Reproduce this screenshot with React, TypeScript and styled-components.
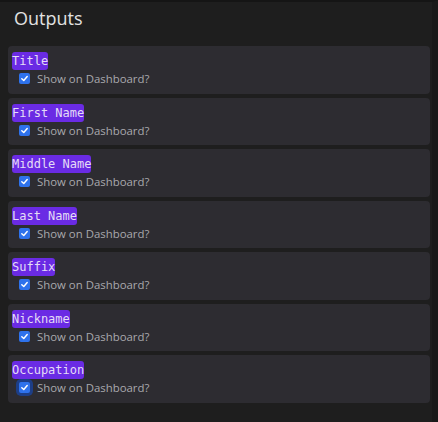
import React from "react";
import styled, { createGlobalStyle } from "styled-components";

const Global = createGlobalStyle`
  html, body { margin: 0; padding: 0; background: #1e1e1e; }
  body { font-family: "Open Sans", "Noto Sans", sans-serif; }
`;

const Panel = styled.div`
  width: 438px;
  height: 422px;
  box-sizing: border-box;
  background: #1e1e1e;
  border-top: 2px solid #151515;
  border-right: 6px solid #191919;
  padding: 0 2px 0 8px;
  display: flex;
  flex-direction: column;
`;

const Heading = styled.h2`
  margin: 0;
  padding: 5px 0 0 6px;
  height: 39px;
  box-sizing: border-box;
  font-family: "Open Sans", sans-serif;
  font-weight: 400;
  font-size: 18px;
  line-height: 22px;
  color: #e2e2e2;
`;

const List = styled.div`
  display: flex;
  flex-direction: column;
  gap: 4px;
  margin-top: 5px;
`;

const Card = styled.div`
  background: #2d2c31;
  border-radius: 4px;
  padding: 6px 4px 7px 4px;
  height: 47.5px;
  box-sizing: border-box;
  display: flex;
  flex-direction: column;
  align-items: flex-start;
`;

const Tag = styled.span`
  font-family: "DejaVu Sans Mono", monospace;
  font-size: 12px;
  line-height: 18px;
  color: #e4dcf6;
  background: #6a2be4;
  border-radius: 3px;
`;

const Row = styled.label`
  display: flex;
  align-items: center;
  gap: 7px;
  padding-left: 7px;
  padding-top: 1px;
  height: 17px;
  font-family: "Open Sans", sans-serif;
  font-size: 11.4px;
  color: #a9a9ad;
`;

const Box = styled.span<{ $focused?: boolean }>`
  width: 11px;
  height: 11px;
  border-radius: 2px;
  background: #2e72ec;
  display: inline-flex;
  align-items: center;
  justify-content: center;
  box-shadow: ${(p) => (p.$focused ? "0 0 0 3px #1d3e86" : "none")};
`;

const fields = ["Title", "First Name", "Middle Name", "Last Name", "Suffix", "Nickname", "Occupation"];

export default function App() {
  return (
    <>
      <Global />
      <Panel>
        <Heading>Outputs</Heading>
        <List>
          {fields.map((f, i) => (
            <Card key={f}>
              <Tag>{f}</Tag>
              <Row>
                <Box $focused={i === fields.length - 1}>
                  <svg width="9" height="9" viewBox="0 0 10 10">
                    <path d="M2 5.2 L4.2 7.3 L8 2.8" stroke="#fff" strokeWidth="1.6" fill="none" strokeLinecap="round" strokeLinejoin="round" />
                  </svg>
                </Box>
                Show on Dashboard?
              </Row>
            </Card>
          ))}
        </List>
      </Panel>
    </>
  );
}
